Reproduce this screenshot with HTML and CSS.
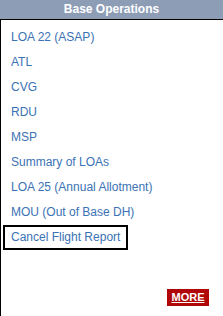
FILE: index.html
```html
<!DOCTYPE html>
<html lang="en">
<head>
  <meta charset="UTF-8" />
  <title>Base Operations</title>
  <link rel="stylesheet" href="styles.css">
</head>
<body>
  <div class="panel">
    <div class="panel-title">Base Operations</div>
    <div class="panel-body">
      <ul class="links">
        <li><a href="#">LOA 22 (ASAP)</a></li>
        <li><a href="#">ATL</a></li>
        <li><a href="#">CVG</a></li>
        <li><a href="#">RDU</a></li>
        <li><a href="#">MSP</a></li>
        <li><a href="#">Summary of LOAs</a></li>
        <li><a href="#">LOA 25 (Annual Allotment)</a></li>
        <li><a href="#">MOU (Out of Base DH)</a></li>
        <li><a href="#" class="focused">Cancel Flight Report</a></li>
      </ul>
      <div class="more-row">
        <a href="#" class="more">MORE</a>
      </div>
    </div>
  </div>
</body>
</html>
```

FILE: styles.css
```css
body {
  margin: 0;
  font-family: "Liberation Sans", Arial, sans-serif;
  background: #fff;
}

.panel {
  width: 223px;
  height: 316px;
  display: flex;
  flex-direction: column;
}

.panel-title {
  background-color: #8d9db6;
  color: #fff;
  font-weight: bold;
  font-size: 12px;
  text-align: center;
  height: 19px;
  line-height: 18px;
  border-bottom: 1px solid #000;
}

.panel-body {
  flex: 1;
  border-left: 1px solid #000;
  display: flex;
  flex-direction: column;
}

.links {
  list-style: none;
  margin: 0;
  padding: 6px 0 0 4px;
}

.links li {
  height: 25px;
}

.links a {
  display: inline-block;
  height: 21px;
  line-height: 21px;
  padding: 0 6px;
  margin-top: 1px;
  font-size: 12px;
  color: #3a72b5;
  text-decoration: none;
}

.links a.focused {
  outline: 2px solid #000;
}

.more-row {
  display: flex;
  justify-content: flex-end;
  padding: 38px 14px 0 0;
}

.more {
  background-color: #b00808;
  color: #fff;
  font-weight: bold;
  font-size: 11px;
  width: 42px;
  height: 17px;
  line-height: 17px;
  text-align: center;
  text-decoration: underline;
}
```
